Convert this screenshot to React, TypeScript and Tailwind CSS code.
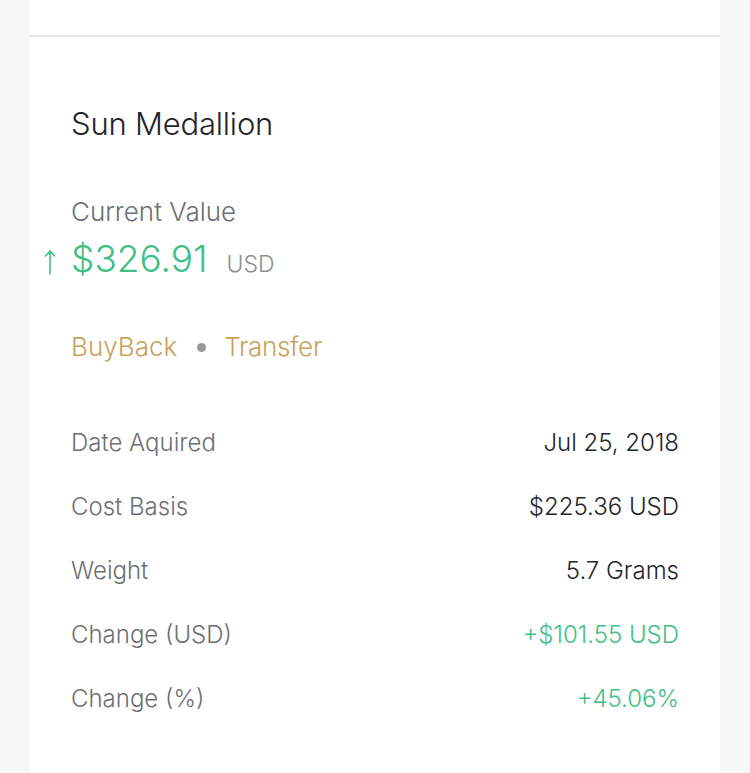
import React from "react";

const rows: { label: string; value: string; green?: boolean }[] = [
  { label: "Date Aquired", value: "Jul 25, 2018" },
  { label: "Cost Basis", value: "$225.36 USD" },
  { label: "Weight", value: "5.7 Grams" },
  { label: "Change (USD)", value: "+$101.55 USD", green: true },
  { label: "Change (%)", value: "+45.06%", green: true },
];

export default function App() {
  return (
    <div
      className="min-h-[773px] w-[750px] bg-[#f7f7f7] px-[30px]"
      style={{ fontFamily: "Inter, Lato, 'Noto Sans', sans-serif" }}
    >
      <div className="min-h-[773px] bg-white">
        <div className="h-[37px] border-b-2 border-[#e3e3e3]" />
        <div className="px-[41px] pt-[69px]">
          <h1 className="text-[31px] font-[350] leading-[36px] tracking-[-0.2px] text-[#23252b]">Sun Medallion</h1>
          <div className="mt-[54px] text-[26px] font-[350] leading-[32px] text-[#6c6f73]">Current Value</div>
          <div className="relative mt-[7px] flex items-baseline">
            <svg
              className="absolute left-[-27px] top-[14px]"
              width="12"
              height="26"
              viewBox="0 0 12 26"
              fill="none"
              stroke="#3fbf86"
              strokeWidth="1.6"
              strokeLinecap="round"
              strokeLinejoin="round"
            >
              <path d="M6 2 V25 M1.5 7 L6 2 L10.5 7" />
            </svg>
            <span className="text-[37px] font-[350] leading-[48px] text-[#3fbf86]">$326.91</span>
            <span className="ml-[19px] text-[23px] font-[350] text-[#8c8f93]">USD</span>
          </div>
          <div className="mt-[47px] flex items-center text-[26px] font-[350] leading-[34px] text-[#c9a15d]">
            <span>BuyBack</span>
            <span className="ml-[20px] mr-[18px] h-[9px] w-[9px] rounded-full bg-[#9a9a9a]" />
            <span className="tracking-[-0.3px]">Transfer</span>
          </div>
          <div className="mt-[64px] flex flex-col gap-[34px]">
            {rows.map((r) => (
              <div key={r.label} className="flex items-center justify-between text-[24px] font-[350] leading-[30px]">
                <span className="text-[#6c6f73]">{r.label}</span>
                <span className={r.green ? "text-[#3fbf86]" : "text-[#23252b]"}>{r.value}</span>
              </div>
            ))}
          </div>
        </div>
      </div>
    </div>
  );
}
